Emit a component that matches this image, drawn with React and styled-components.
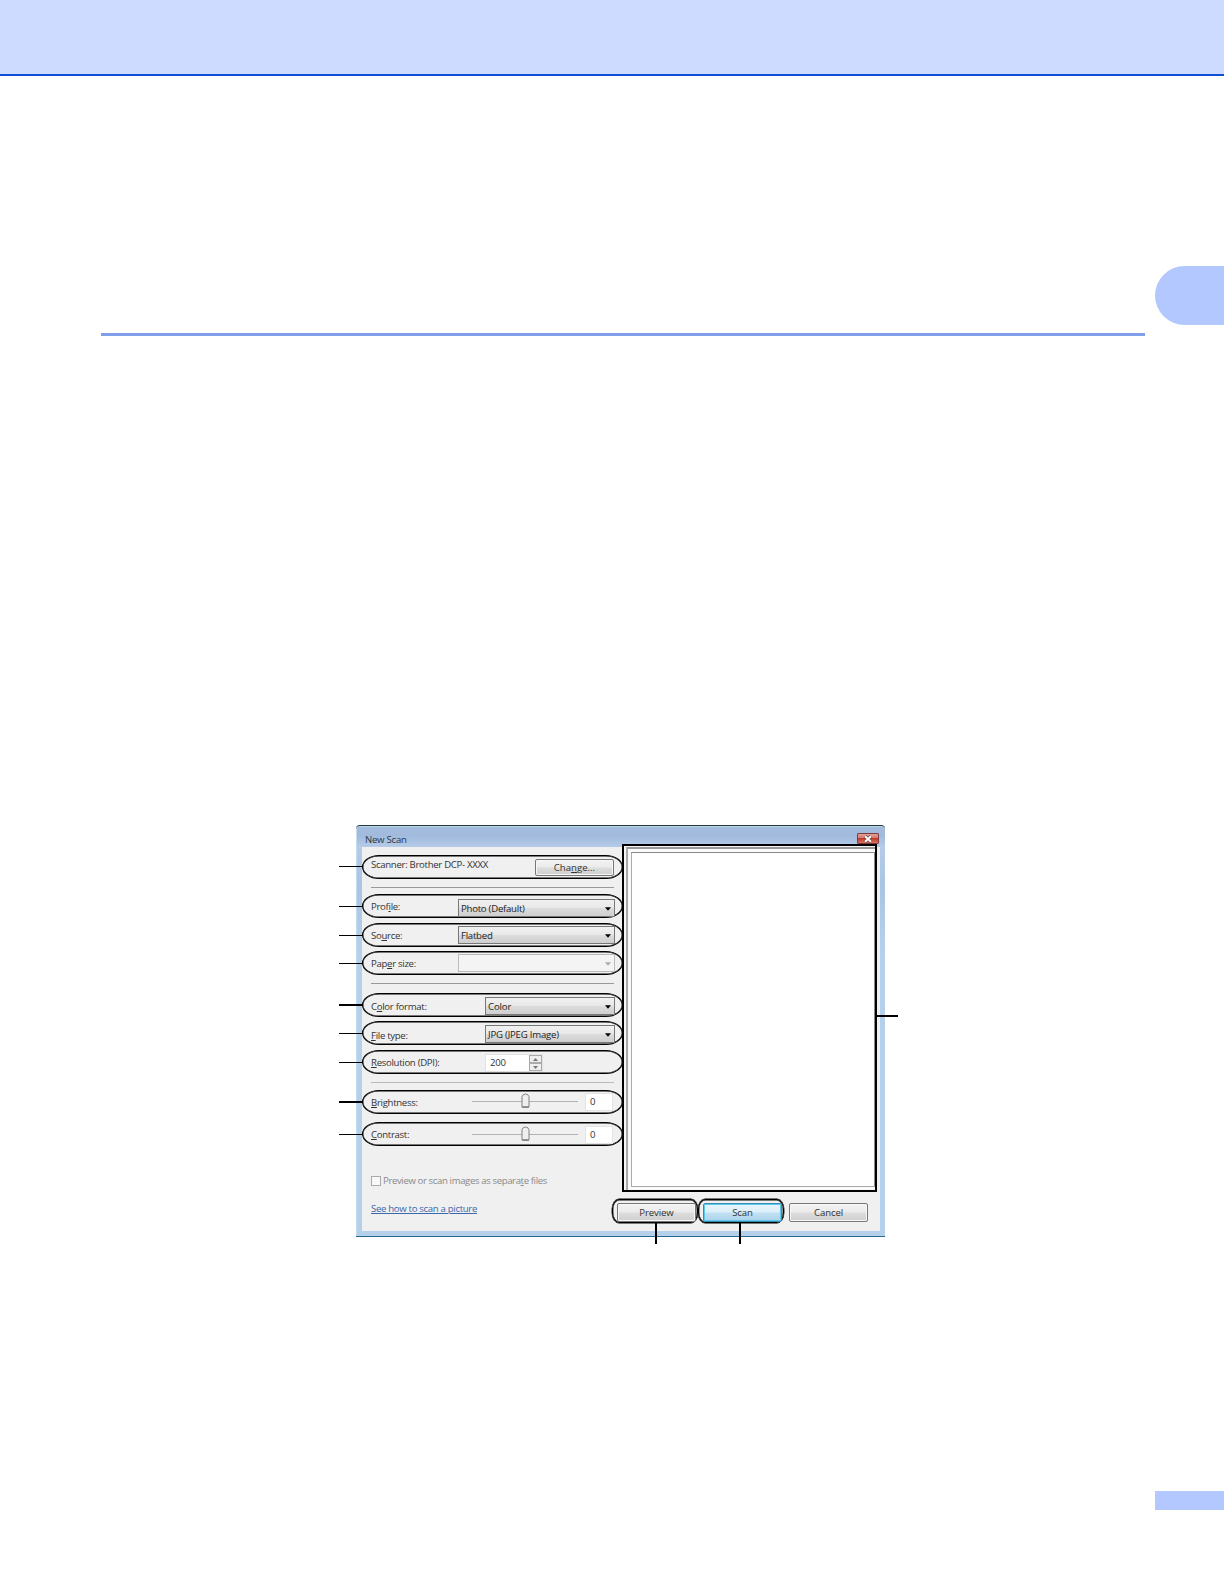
import React from "react";
import styled, { createGlobalStyle, css } from "styled-components";

const GlobalStyle = createGlobalStyle`
  * { box-sizing: border-box; }
  body { margin: 0; background: #fff; }
`;

const Page = styled.div`
  display: flex;
  flex-direction: column;
  width: 1224px;
  height: 1584px;
  overflow: hidden;
  background: #fff;
  font-family: "Open Sans", "Noto Sans", sans-serif;
  font-size: 9.6px;
  line-height: 14px;
  letter-spacing: -0.2px;
  color: #333;
`;

const Banner = styled.header`
  flex: none;
  height: 76px;
  background: #ccdbff;
  border-bottom: 2px solid #0f4fd8;
`;

const ChapterBand = styled.div`
  flex: none;
  display: flex;
  justify-content: space-between;
  align-items: flex-end;
  margin-top: 190px;
  height: 70px;
  padding-left: 101px;
`;

const HeadingRule = styled.div`
  width: 1044px;
  height: 3px;
  background: #809fea;
`;

const ChapterTab = styled.div`
  align-self: flex-start;
  width: 69px;
  height: 59px;
  border-radius: 30px 0 0 30px;
  background: #b2c8ff;
`;

const PageNumber = styled.footer`
  flex: none;
  align-self: flex-end;
  width: 69px;
  height: 19px;
  margin-top: 254px;
  background: #b2c8ff;
`;

const Dialog = styled.section`
  flex: none;
  display: flex;
  flex-direction: column;
  width: 529px;
  height: 412px;
  margin: 489px 0 0 356px;
  padding: 0 5px 5px 6px;
  border-top: 1px solid #22343f;
  border-bottom: 1px solid #286890;
  border-radius: 4px 4px 0 0;
  background: linear-gradient(#a3badb 0, #a2bbdd 10px, #b5cbe8 21px, #a9c5e4 60px, #b4d0ea 120px);
  box-shadow: inset 0 1px 0 #b9d9e6, inset 1px 0 0 #c4dcee;
`;

const TitleBar = styled.div`
  flex: none;
  display: flex;
  justify-content: space-between;
  height: 21px;
  padding: 6px 1px 0 3px;
  color: #293746;
`;

const CloseButton = styled.button`
  display: flex;
  align-items: center;
  justify-content: center;
  width: 22px;
  height: 11px;
  margin-top: 1px;
  padding: 0;
  border: 1px solid #7d3b40;
  border-radius: 1px;
  background: linear-gradient(#e0a09a 0, #d4776d 45%, #bd392a 50%, #d9745c 100%);
`;

const Body = styled.div`
  flex: 1;
  display: flex;
  flex-direction: column;
  background: #f0f0f0;
`;

const Panels = styled.div`
  display: flex;
  height: 345px;
`;

const Settings = styled.div`
  width: 260px;
  padding-top: 8px;
`;

const callout = css`
  border: 1px solid #000;
  box-shadow: inset 0 0 0 0.4px #000;
`;

const Row = styled.div`
  ${callout}
  position: relative;
  display: flex;
  align-items: flex-start;
  width: 261px;
  height: 24px;
  margin-top: ${(p) => p.$gap || 0}px;
  padding-left: 8px;
  border-radius: 17px / 12px;

  &::before {
    content: "";
    position: absolute;
    right: 100%;
    top: ${(p) => (p.$tick || 11) - 1}px;
    width: 24px;
    height: ${(p) => (p.$bold ? 2 : 1)}px;
    background: #000;
  }
`;

const Label = styled.span`
  flex: none;
  width: ${(p) => p.$w}px;
  margin-top: ${(p) => p.$y}px;
  white-space: nowrap;
  letter-spacing: ${(p) => p.$ls ?? -0.3}px;
`;

const Separator = styled.hr`
  width: 243px;
  height: 1px;
  margin: ${(p) => p.$gap}px 0 0 9px;
  border: 0;
  background: ${(p) => p.$color || "#999"};
`;

const Select = styled.div`
  display: flex;
  justify-content: space-between;
  align-items: center;
  width: ${(p) => p.$w}px;
  height: 18px;
  margin-top: ${(p) => p.$y}px;
  padding: 1px 3px 0 2px;
  border: 1px solid ${(p) => (p.$disabled ? "#bbb" : "#777")};
  background: ${(p) => (p.$disabled ? "#f4f4f4" : "linear-gradient(#f1f1f1 0, #e8e8e8 48%, #dcdcdc 52%, #cfcfcf 100%)")};
  color: #222;
  letter-spacing: ${(p) => p.$ls ?? -0.25}px;
  white-space: nowrap;
`;

const Button = styled.button`
  width: 79px;
  height: ${(p) => p.$h || 19}px;
  margin: ${(p) => p.$y || 0}px 0 0;
  padding: 0;
  border: 1px solid ${(p) => (p.$primary ? "#3a8eb4" : "#777")};
  border-radius: 2px;
  background: ${(p) =>
    p.$primary
      ? "linear-gradient(#e9f5fb 0, #dceff9 48%, #c2e1f2 52%, #abd3ea 100%)"
      : "linear-gradient(#f2f2f2 0, #ebebeb 48%, #dddddd 52%, #cfcfcf 100%)"};
  box-shadow: inset 0 0 0 1px ${(p) => (p.$primary ? "#5cc8ee" : "#f7f7f7")};
  font: inherit;
  line-height: 14px;
  letter-spacing: ${(p) => p.$ls ?? -0.1}px;
  color: #333;
`;

const Spinner = styled.div`
  display: flex;
  justify-content: space-between;
  width: 58px;
  height: 18px;
  margin-top: 3px;
  padding-left: 4px;
  border: 1px solid #e2e2e2;
  background: #fff;
  line-height: 15px;
`;

const SpinButtons = styled.div`
  display: grid;
  grid-template-rows: 1fr 1fr;
  width: 13px;
`;

const SpinButton = styled.div`
  display: flex;
  align-items: center;
  justify-content: center;
  border: 1px solid #aaa;
  background: #eee;
`;

const Slider = styled.div`
  display: flex;
  align-items: center;
  justify-content: center;
  width: 106px;
  height: 16px;
  margin-top: ${(p) => p.$y}px;
  background: linear-gradient(#b4b4b4, #b4b4b4) 0 8px / 100% 1px no-repeat;
`;

const NumberBox = styled.div`
  width: 28px;
  height: 18px;
  margin: ${(p) => p.$y}px 0 0 7px;
  padding-left: 4px;
  border: 1px solid #e4e4e4;
  background: #fff;
  line-height: 16px;
`;

const SplitFiles = styled.label`
  display: flex;
  align-items: center;
  gap: 2px;
  margin: 28px 0 0 9px;
  color: #8a8a8a;
  letter-spacing: -0.38px;
  white-space: nowrap;
`;

const Checkbox = styled.span`
  width: 10px;
  height: 10px;
  border: 1px solid #aaa;
  background: #f8f8f8;
`;

const PreviewPane = styled.div`
  position: relative;
  width: 255px;
  height: 348px;
  margin-top: -3px;
  padding: 1px 0 0 2px;
  border: 2px solid #000;
  background: #f5f5f5;

  &::after {
    content: "";
    position: absolute;
    left: 100%;
    top: 169px;
    width: 23px;
    height: 2px;
    background: #000;
  }
`;

const PreviewFrame = styled.div`
  height: 343px;
  padding: 3px 0 0 3px;
  border-top: 2px solid #999;
  border-left: 2px solid #aaa;
  background: #fbfbfb;
`;

const PreviewSheet = styled.div`
  width: 244px;
  height: 335px;
  border: 1px solid #888;
  border-left-color: #aaa;
  border-bottom-color: #aaa;
  background: #fff;
`;

const Footer = styled.div`
  display: flex;
  align-items: flex-start;
  padding: 7px 0 0 9px;
`;

const HelpLink = styled.a`
  width: 241px;
  margin-top: 3px;
  color: #3b68ad;
  text-decoration: underline;
  letter-spacing: -0.32px;
`;

const ButtonCallout = styled.div`
  ${callout}
  box-shadow: 0 0 0 0.4px #000, inset 0 0 0 0.4px #000;
  position: relative;
  width: 86px;
  height: 24px;
  padding: 3px 0 0 4px;
  border-radius: 7px / 10px;

  &::after {
    content: "";
    position: absolute;
    left: ${(p) => p.$tick}px;
    top: 100%;
    width: 2px;
    height: 22px;
    background: #000;
  }
`;

const CancelSlot = styled.div`
  padding: 4px 0 0 5px;
`;

const Arrow = ({ color = "#000" }) => (
  <svg width="6" height="4" viewBox="0 0 6 4">
    <path d="M0 0.3H6L3 3.8Z" fill={color} />
  </svg>
);

const Spin = ({ up }) => (
  <svg width="5" height="3" viewBox="0 0 5 3">
    <path d={up ? "M0 3H5L2.5 0Z" : "M0 0H5L2.5 3Z"} fill="#777" />
  </svg>
);

const Thumb = () => (
  <svg width="9" height="16" viewBox="0 0 9 16">
    <path d="M1 14V3.6Q1.6 1.2 4.5 1Q7.4 1.2 8 3.6V14Z" fill="#efefef" stroke="#808080" strokeLinejoin="round" />
    <path d="M1.2 14.1H7.8" stroke="#666" />
  </svg>
);

const Cross = () => (
  <svg width="10" height="8" viewBox="0 0 10 8">
    <path d="M2 1.2L8 6.8M8 1.2L2 6.8" stroke="#704040" strokeWidth="3.2" />
    <path d="M2 1.2L8 6.8M8 1.2L2 6.8" stroke="#fff" strokeWidth="1.9" />
  </svg>
);

export default function App() {
  return (
    <Page>
      <GlobalStyle />
      <Banner />
      <ChapterBand>
        <HeadingRule />
        <ChapterTab />
      </ChapterBand>
      <Dialog>
        <TitleBar>
          <Label $y={1} $ls={-0.25}>New Scan</Label>
          <CloseButton aria-label="Close"><Cross /></CloseButton>
        </TitleBar>
        <Body>
          <Panels>
            <Settings>
              <Row>
                <Label $w={164} $y={2}>Scanner: Brother DCP- XXXX</Label>
                <Button $h={17} $y={3} $ls={0}>Cha<u>n</u>ge...</Button>
              </Row>
              <Separator $gap={8} />
              <Row $gap={6} $tick={12}>
                <Label $w={87} $y={5}>Prof<u>i</u>le:</Label>
                <Select $w={157} $y={4}>Photo (Default)<Arrow /></Select>
              </Row>
              <Row $gap={5} $tick={12}>
                <Label $w={87} $y={5}>So<u>u</u>rce:</Label>
                <Select $w={157} $y={2}>Flatbed<Arrow /></Select>
              </Row>
              <Row $gap={4} $tick={12}>
                <Label $w={87} $y={5}>Pap<u>e</u>r size:</Label>
                <Select $w={157} $y={2} $disabled><span /><Arrow color="#aaa" /></Select>
              </Row>
              <Separator $gap={8} />
              <Row $gap={9} $bold>
                <Label $w={114} $y={6}>C<u>o</u>lor format:</Label>
                <Select $w={130} $y={3} $ls={-0.15}>Color<Arrow /></Select>
              </Row>
              <Row $gap={4} $tick={12}>
                <Label $w={114} $y={7}><u>F</u>ile type:</Label>
                <Select $w={130} $y={3} $ls={-0.2}>JPG (JPEG Image)<Arrow /></Select>
              </Row>
              <Row $gap={5} $tick={12}>
                <Label $w={114} $y={5}><u>R</u>esolution (DPI):</Label>
                <Spinner>
                  200
                  <SpinButtons>
                    <SpinButton><Spin up /></SpinButton>
                    <SpinButton><Spin /></SpinButton>
                  </SpinButtons>
                </Spinner>
              </Row>
              <Separator $gap={8} $color="#bbb" />
              <Row $gap={7} $bold>
                <Label $w={101} $y={5}><u>B</u>rightness:</Label>
                <Slider $y={2}><Thumb /></Slider>
                <NumberBox $y={2}>0</NumberBox>
              </Row>
              <Row $gap={8} $tick={12}>
                <Label $w={101} $y={5}><u>C</u>ontrast:</Label>
                <Slider $y={3}><Thumb /></Slider>
                <NumberBox $y={3}>0</NumberBox>
              </Row>
              <SplitFiles>
                <Checkbox />
                <span>Preview or scan images as separa<u>t</u>e files</span>
              </SplitFiles>
            </Settings>
            <PreviewPane>
              <PreviewFrame>
                <PreviewSheet />
              </PreviewFrame>
            </PreviewPane>
          </Panels>
          <Footer>
            <HelpLink>See how to scan a picture</HelpLink>
            <ButtonCallout $tick={42}><Button>Preview</Button></ButtonCallout>
            <ButtonCallout $tick={40}><Button $primary>Scan</Button></ButtonCallout>
            <CancelSlot><Button>Cancel</Button></CancelSlot>
          </Footer>
        </Body>
      </Dialog>
      <PageNumber />
    </Page>
  );
}
